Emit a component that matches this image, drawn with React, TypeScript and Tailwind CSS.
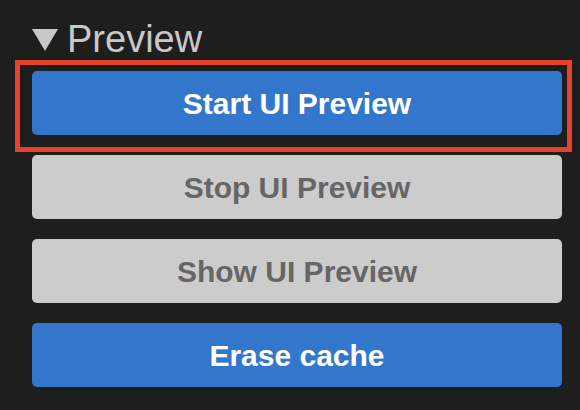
import React from 'react'

const buttons = [
  { label: "Start UI Preview", enabled: true },
  { label: "Stop UI Preview", enabled: false },
  { label: "Show UI Preview", enabled: false },
  { label: "Erase cache", enabled: true },
];

const App = () => {
  return (
    <div
      className="relative w-[580px] h-[410px] bg-[#1e1e1e] overflow-hidden"
      style={{ fontFamily: '"Liberation Sans", Arial, sans-serif' }}
    >
      {/* Section header */}
      <div className="flex items-center h-[60px] pl-[32px] pt-[18px] text-[#c8c8c8]">
        <svg width="26" height="22" viewBox="0 0 26 22" className="mt-[2px]">
          <polygon points="0,0 26,0 13,22" fill="#c8c8c8" />
        </svg>
        <span className="ml-[9px] text-[38px] leading-none">Preview</span>
      </div>

      {/* Buttons */}
      <div className="flex flex-col gap-[20px] pl-[32px] pr-[18px] pt-[11px]">
        {buttons.map((b, i) => (
          <button
            key={i}
            className={
              b.enabled
                ? "h-[64px] rounded-[5px] bg-[#3377cc] text-white text-[30px] font-bold"
                : "h-[64px] rounded-[5px] bg-[#cccccc] text-[#666666] text-[30px] font-bold"
            }
          >
            {b.label}
          </button>
        ))}
      </div>

      {/* Highlight outline */}
      <div className="absolute left-[15px] top-[60px] w-[557px] h-[92px] border-[5px] border-[#e8412c] pointer-events-none" />
    </div>
  );
}

export default App
